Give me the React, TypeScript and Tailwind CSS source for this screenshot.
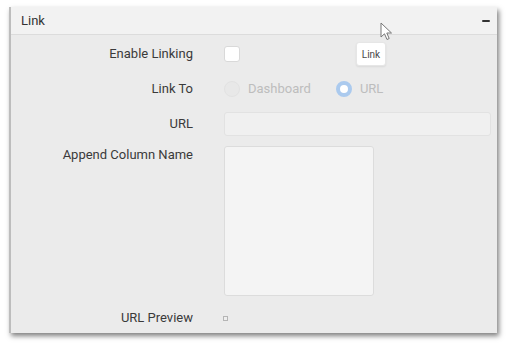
import React from 'react';

const labelCls = 'text-right text-[13px] text-[#3a3a3a] leading-[16px]';

const App: React.FC = () => {
  return (
    <div className="w-[511px] h-[348px] bg-white pt-[7px] pl-[9px] font-['Roboto',sans-serif] relative">
      <div className="w-[488px] h-[326px] bg-[#ebebeb] border-l-2 border-[#bdbdbd] shadow-[2px_3px_5px_rgba(0,0,0,0.5)] flex flex-col">
        <div className="h-[28px] shrink-0 bg-[#f2f2f2] border-b border-[#dcdcdc] flex items-center justify-between pl-[10px] pr-[7px]">
          <span className="text-[13px] text-[#333]">Link</span>
          <span className="w-[8px] h-[2px] bg-[#333] rounded-[1px]" />
        </div>

        <div className="grid grid-cols-[182px_1fr] gap-x-[31px] pr-[6px] pt-[11px]">
          <div className={`${labelCls} h-[16px] flex items-center justify-end`}>Enable Linking</div>
          <div className="h-[16px] flex items-center">
            <div className="w-[16px] h-[16px] bg-white border border-[#d9d9d9] rounded-[3px]" />
          </div>

          <div className={`${labelCls} mt-[19px] h-[16px] flex items-center justify-end`}>Link To</div>
          <div className="mt-[19px] h-[16px] flex items-center text-[13px] text-[#bdbdbd]">
            <span className="w-[16px] h-[16px] rounded-full bg-[#e8e8e8] border border-[#e2e2e2]" />
            <span className="ml-[8px]">Dashboard</span>
            <span className="ml-[25px] w-[16px] h-[16px] rounded-full bg-white border-[4px] border-[#abcaee]" />
            <span className="ml-[8px]">URL</span>
          </div>

          <div className={`${labelCls} mt-[15px] h-[24px] flex items-center justify-end`}>URL</div>
          <div className="mt-[15px] h-[24px] bg-[#f0f0f0] border border-[#e2e2e2] rounded-[3px]" />

          <div className={`${labelCls} mt-[10px] pt-[1px]`}>Append Column Name</div>
          <div className="mt-[10px]">
            <div className="w-[150px] h-[150px] bg-[#f4f4f4] border border-[#dcdcdc] rounded-[3px]" />
          </div>

          <div className={`${labelCls} mt-[14px] h-[16px] flex items-center justify-end`}>URL Preview</div>
          <div className="mt-[14px] h-[16px] flex items-center">
            <span className="-ml-[1px] w-[5px] h-[5px] border border-[#b5b5b5] bg-[#eee]" />
          </div>
        </div>
      </div>

      <div className="absolute left-[356px] top-[42px] w-[30px] h-[24px] bg-white border border-[#e6e6e6] rounded-[3px] shadow-[0_1px_2px_rgba(0,0,0,0.08)] flex items-center justify-center text-[10px] text-[#4a4a4a]">
        Link
      </div>

      <svg className="absolute left-[380px] top-[22px]" width="14" height="20" viewBox="0 0 14 20">
        <path d="M1 1 L1 15 L4.5 11.8 L7 17.5 L9.2 16.5 L6.8 11 L11.5 11 Z" fill="white" stroke="#777" strokeWidth="1" strokeLinejoin="round" />
      </svg>
    </div>
  );
};

export default App;
